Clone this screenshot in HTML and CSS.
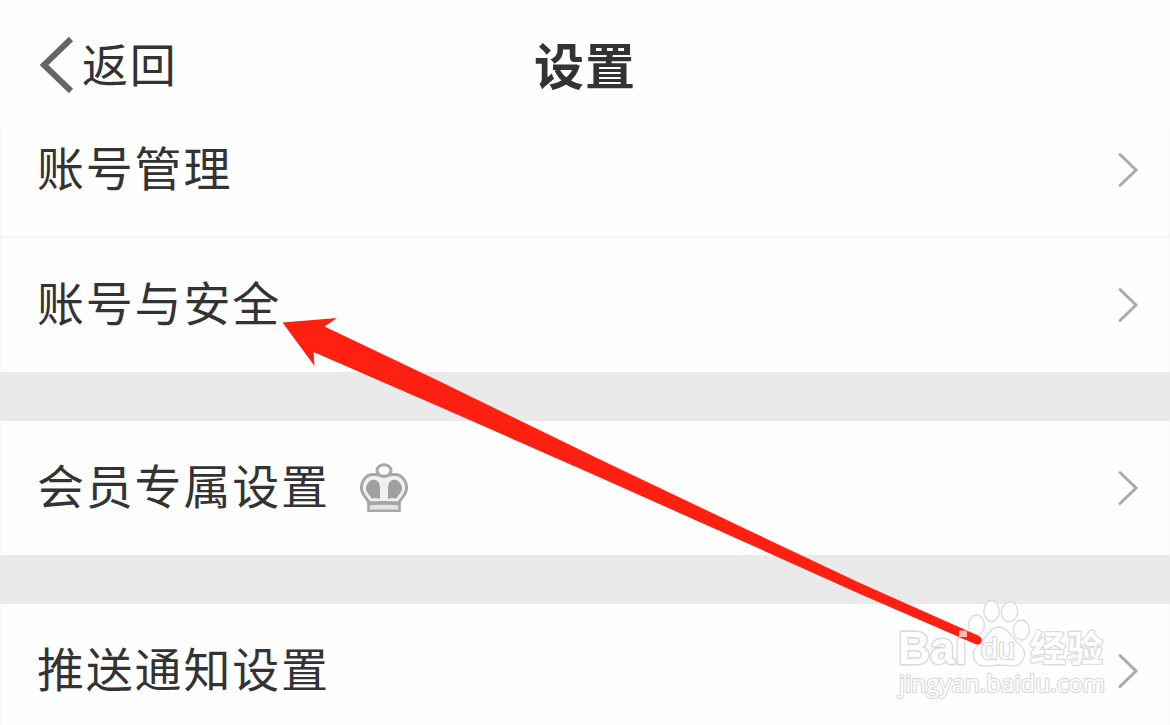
FILE: index.html
```html
<!DOCTYPE html>
<html lang="zh-CN">

<head>
  <meta charset="UTF-8">
  <meta name="viewport" content="width=device-width, initial-scale=1.0">
  <title>设置</title>
  <link rel="stylesheet" href="styles.css">
</head>

<body>
  <header class="header">
    <a class="back">
      <svg class="back-icon" viewBox="0 0 36 60">
        <path d="M33 4 L6 30 L33 56" />
      </svg>
      <span class="label">返回</span>
    </a>
    <h1 class="title">设置</h1>
  </header>

  <main class="settings">
    <!-- Account -->
    <ul class="group">
      <li class="row row-first">
        <span class="label">账号管理</span>
        <svg class="chevron" viewBox="0 0 24 38"><path d="M3 3.500 L19 19 L3 34.500" /></svg>
      </li>
      <li class="row">
        <span class="label">账号与安全</span>
        <svg class="chevron" viewBox="0 0 24 38"><path d="M3 3.500 L19 19 L3 34.500" /></svg>
      </li>
    </ul>

    <!-- Members -->
    <ul class="group">
      <li class="row">
        <span class="label">会员专属设置</span>
        <svg class="crown" viewBox="0 0 50 52">
          <path class="crown-body" d="M10 41 C9.500 37 3 34 2.500 27 C2 18 8 12.500 14 12.500 Q19 12 25 14.500 Q31 12 36 12.500 C42 12.500 48 18 47.500 27 C47 34 40.500 37 40 41 Z" />
          <path class="crown-panel" d="M12.500 36.500 C11 33 7.500 31 7 26.500 C7 22 11 17.500 15 17.500 Q21 19 21 25 L21 37 Q17 35.500 12.500 36.500 Z M37.500 36.500 C39 33 42.500 31 43 26.500 C43 22 39 17.500 35 17.500 Q29 19 29 25 L29 37 Q33 35.500 37.500 36.500 Z" />
          <ellipse class="crown-ring" cx="25" cy="8.500" rx="7" ry="5.800" />
          <path class="crown-base" d="M9.500 41 Q25 39.500 40.500 41 V48.800 H9.500 Z" />
          <path class="crown-line" d="M9 42 Q25 40.500 41 42" />
        </svg>
        <svg class="chevron" viewBox="0 0 24 38"><path d="M3 3.500 L19 19 L3 34.500" /></svg>
      </li>
    </ul>

    <!-- Notifications -->
    <ul class="group">
      <li class="row">
        <span class="label">推送通知设置</span>
        <svg class="chevron" viewBox="0 0 24 38"><path d="M3 3.500 L19 19 L3 34.500" /></svg>
      </li>
    </ul>
  </main>

  <!-- Arrow and watermark lie over the list -->
  <svg class="overlay" viewBox="0 0 1170 725">
    <g class="watermark">
      <text class="wm-bai" x="898" y="664" textLength="69" lengthAdjust="spacingAndGlyphs">Bai</text>
      <ellipse cx="976.500" cy="625" rx="8" ry="10" />
      <ellipse cx="991.500" cy="611" rx="7.700" ry="10.500" />
      <ellipse cx="1009.500" cy="612" rx="8" ry="10" transform="rotate(8 1009.500 612)" />
      <ellipse cx="1021.500" cy="630" rx="8" ry="10" />
      <path d="M999 627 C1007 627 1010 635 1016 641 C1024 648 1027 653 1023 660 C1018 669 1009 665 999 665 C989 665 980 669 975 661 C971 653 974 648 982 641 C988 635 991 627 999 627 Z" />
      <text class="wm-du" x="981" y="659" textLength="34" lengthAdjust="spacingAndGlyphs">du</text>
      <text class="wm-cn" x="1030" y="662" textLength="73">经验</text>
      <text class="wm-url" x="899" y="692" textLength="206">jingyan.baidu.com</text>
    </g>
    <path class="arrow" d="M282.500 322.500 L337 318 L324.500 326.500 L440 381.500 L600 459.500 L750 531 L860 583 L978 635.500 Q983 638 981.500 641.500 Q980 646 974 643.500 L860 594 L750 544.500 L600 477.500 L440 407 L313.500 352 L314.500 366 Z" />
    <rect class="wm-dot" x="959" y="630.500" width="8" height="6.500" />
  </svg>
</body>

</html>
```
FILE: styles.css
```css
body {
  margin: 0;
  height: 725px;
  overflow: hidden;
  background: #fefefe;
  color: #333;
  font-family: "Noto Sans CJK SC", sans-serif;
  font-size: 47px;
  letter-spacing: 1.8px;
}

ul {
  margin: 0;
  padding: 0;
  list-style: none;
}

.header {
  display: grid;
  grid-template-columns: 1fr auto 1fr;
  align-items: center;
  height: 130px;
  box-sizing: border-box;
  padding: 0 38px;
}

.back {
  display: flex;
  align-items: center;
  gap: 8px;
  font-size: 46px;
}

.back-icon {
  width: 36px;
  height: 60px;
  fill: none;
  stroke: #666;
  stroke-width: 6;
}

/* the font sits low in its line box */
.label {
  padding-bottom: 9px;
}

.back .label {
  padding-bottom: 6px;
}

.title {
  margin: 0;
  padding-bottom: 5px;
  font-size: 50px;
  font-weight: 700;
  letter-spacing: 1px;
}

/* setting rows */
.settings {
  display: flex;
  flex-direction: column;
  gap: 49px;
  background: #eaeaea;
}

.group {
  background: #fefefe;
}

.row {
  display: flex;
  align-items: center;
  height: 134px;
  box-sizing: border-box;
  padding: 0 28px 0 36px;
  border-left: 1px solid #f7f7f7;
  border-right: 1px solid #f7f7f7;
}

.row-first {
  height: 108px;
  padding-bottom: 26px;
  border-bottom: 2px solid #f5f5f5;
}

.chevron {
  width: 24px;
  height: 38px;
  margin-left: auto;
  fill: none;
  stroke: #aaa;
  stroke-width: 3;
  stroke-linecap: round;
}

.crown {
  width: 50px;
  height: 52px;
  margin-left: 29px;
}

.crown-body {
  fill: #f0f0f0;
  stroke: #a6a6a6;
  stroke-width: 3;
}

.crown-ring {
  fill: #fafafa;
  stroke: #a6a6a6;
  stroke-width: 3;
}

.crown-panel {
  fill: #a0a0a0;
}

.crown-base {
  fill: #e4e4e4;
  stroke: #a6a6a6;
  stroke-width: 2.5;
}

.crown-line {
  fill: none;
  stroke: #a6a6a6;
  stroke-width: 3;
}

/* arrow + watermark */
.overlay {
  position: absolute;
  top: 0;
  left: 0;
  width: 1170px;
  height: 725px;
  letter-spacing: 0;
}

.arrow {
  fill: #ff2012;
}

.watermark {
  fill: #fefefe;
  stroke: #dadada;
  stroke-width: 1.3;
  stroke-linejoin: round;
}

.watermark text {
  stroke-width: 2.4;
  paint-order: stroke;
}

.watermark .wm-bai {
  font: 700 46px "Liberation Sans", sans-serif;
  stroke-width: 3;
}

.wm-du {
  font: 400 29px "Liberation Sans", sans-serif;
}

.wm-cn {
  font: 700 36px "Noto Sans CJK SC", sans-serif;
}

.wm-url {
  font: 400 24px "Open Sans", sans-serif;
}

.wm-dot {
  fill: #ffb9b4;
}
```
